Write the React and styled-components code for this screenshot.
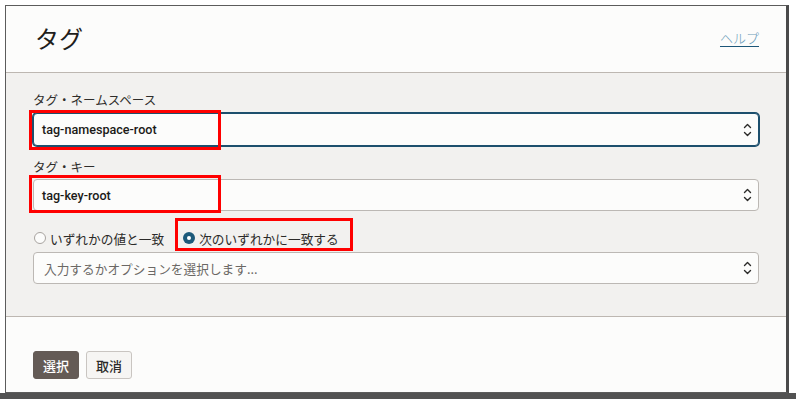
import React from "react";
import styled, { createGlobalStyle } from "styled-components";

const Global = createGlobalStyle`
  html, body { margin: 0; padding: 0; }
  body {
    font-family: Roboto, "Noto Sans CJK JP", sans-serif;
    color: #2b2a28;
  }
`;

const Page = styled.div`
  width: 796px;
  height: 399px;
  box-sizing: border-box;
  padding: 5px 0 0 5px;
  background: linear-gradient(to bottom, #ffffff 393px, #525252 393px);
  overflow: hidden;
`;

const Dialog = styled.div`
  width: 784px;
  height: 388px;
  box-sizing: border-box;
  display: flex;
  flex-direction: column;
  border: 1px solid #5c5c5c;
  border-right: 3px solid #4a4a4a;
  background: #fcfcfb;
`;

const Header = styled.div`
  height: 66px;
  flex: none;
  display: flex;
  align-items: center;
  justify-content: space-between;
  padding: 0 27px 0 29px;
  border-bottom: 1px solid #bdb7b1;
  background: #fcfcfb;
`;

const Title = styled.h1`
  margin: 0 0 3px;
  font-family: "Noto Sans CJK JP", sans-serif;
  font-size: 24px;
  font-weight: 400;
  color: #1f1e1c;
`;

const HelpLink = styled.a`
  font-family: "Noto Sans CJK JP", sans-serif;
  font-size: 13px;
  font-weight: 300;
  color: #6d9cba;
  text-decoration: underline;
  text-decoration-color: #1c5678;
  text-underline-offset: 3px;
  margin-bottom: 4px;
`;

const Body = styled.div`
  flex: none;
  height: 244px;
  box-sizing: border-box;
  padding: 19px 27px 0 27px;
  background: #f2f1ef;
  border-bottom: 1px solid #bdb7b1;
`;

const Label = styled.div`
  font-family: "Noto Sans CJK JP", sans-serif;
  font-size: 12.5px;
  line-height: 16px;
  color: #2f2d2b;
  margin-top: ${(p) => p.$top || 0}px;
`;

const FieldWrap = styled.div`
  position: relative;
  margin-top: ${(p) => p.$top || 0}px;
`;

const Select = styled.div`
  height: ${(p) => (p.$focused ? 33 : 32)}px;
  box-sizing: border-box;
  display: flex;
  align-items: center;
  justify-content: space-between;
  padding: 0 6px 0 8px;
  background: #fcfcfb;
  border: 1px solid ${(p) => (p.$focused ? "#1d4f6d" : "#bcb8b4")};
  box-shadow: ${(p) => (p.$focused ? "0 0 0 1px #1d4f6d" : "none")};
  border-radius: 4px;
`;

const Value = styled.span`
  font-family: Roboto, "Noto Sans CJK JP", sans-serif;
  font-size: 12.6px;
  font-weight: 500;
  color: #1b1a18;
`;

const Placeholder = styled.span`
  font-family: "Noto Sans CJK JP", sans-serif;
  font-size: 12.7px;
  color: #6b6865;
  margin-left: 2px;
`;

const Highlight = styled.div`
  position: absolute;
  left: ${(p) => p.$left}px;
  top: ${(p) => p.$top}px;
  width: ${(p) => p.$width}px;
  height: ${(p) => p.$height}px;
  box-sizing: border-box;
  border: 3px solid #ff0000;
  pointer-events: none;
`;

const RadioRow = styled.div`
  position: relative;
  display: flex;
  align-items: center;
  height: 20px;
  margin-top: 17px;
`;

const RadioItem = styled.label`
  display: flex;
  align-items: center;
  gap: 4px;
  margin-right: ${(p) => p.$gap || 0}px;
  font-family: "Noto Sans CJK JP", sans-serif;
  font-size: 12.7px;
  color: #2b2a28;
`;

const RadioDot = styled.span`
  width: 12px;
  height: 12px;
  box-sizing: border-box;
  border-radius: 50%;
  border: ${(p) => (p.$checked ? "none" : "1px solid #a8a4a0")};
  background: ${(p) => (p.$checked ? "#1d5a7a" : "#fcfcfb")};
  display: flex;
  align-items: center;
  justify-content: center;
  margin-left: 1px;
  &::after {
    content: "";
    display: ${(p) => (p.$checked ? "block" : "none")};
    width: 4px;
    height: 4px;
    border-radius: 50%;
    background: #ffffff;
  }
`;

const Footer = styled.div`
  flex: 1;
  display: flex;
  align-items: flex-end;
  gap: 7px;
  padding: 0 0 13px 27px;
  background: #fcfcfb;
`;

const Button = styled.button`
  height: 28px;
  width: 46px;
  padding: 0;
  border-radius: 3px;
  font-family: "Noto Sans CJK JP", sans-serif;
  font-size: 13px;
  font-weight: 500;
  cursor: pointer;
  color: ${(p) => (p.$primary ? "#ffffff" : "#2b2a28")};
  background: ${(p) => (p.$primary ? "#645b56" : "#f6f5f3")};
  border: 1px solid ${(p) => (p.$primary ? "#645b56" : "#c9c5c1")};
`;

const Chevrons = () => (
  <svg width="9" height="16" viewBox="0 0 9 16" fill="none">
    <path d="M1.5 5.5 L4.5 2.5 L7.5 5.5" stroke="#2b2a28" strokeWidth="1.4" strokeLinecap="round" strokeLinejoin="round" />
    <path d="M1.5 10.5 L4.5 13.5 L7.5 10.5" stroke="#2b2a28" strokeWidth="1.4" strokeLinecap="round" strokeLinejoin="round" />
  </svg>
);

export default function App() {
  return (
    <>
      <Global />
      <Page>
        <Dialog>
          <Header>
            <Title>タグ</Title>
            <HelpLink href="#">ヘルプ</HelpLink>
          </Header>
          <Body>
            <Label>タグ・ネームスペース</Label>
            <FieldWrap $top={5}>
              <Select $focused>
                <Value>tag-namespace-root</Value>
                <Chevrons />
              </Select>
              <Highlight $left={-4} $top={-3} $width={192} $height={40} />
            </FieldWrap>
            <Label $top={13}>タグ・キー</Label>
            <FieldWrap $top={4}>
              <Select>
                <Value>tag-key-root</Value>
                <Chevrons />
              </Select>
              <Highlight $left={-4} $top={-4} $width={192} $height={38} />
            </FieldWrap>
            <RadioRow>
              <RadioItem $gap={18}>
                <RadioDot />
                いずれかの値と一致
              </RadioItem>
              <RadioItem>
                <RadioDot $checked />
                次のいずれかに一致する
              </RadioItem>
              <Highlight $left={142} $top={-10} $width={178} $height={33} />
            </RadioRow>
            <FieldWrap $top={4}>
              <Select>
                <Placeholder>入力するかオプションを選択します...</Placeholder>
                <Chevrons />
              </Select>
            </FieldWrap>
          </Body>
          <Footer>
            <Button $primary>選択</Button>
            <Button>取消</Button>
          </Footer>
        </Dialog>
      </Page>
    </>
  );
}
